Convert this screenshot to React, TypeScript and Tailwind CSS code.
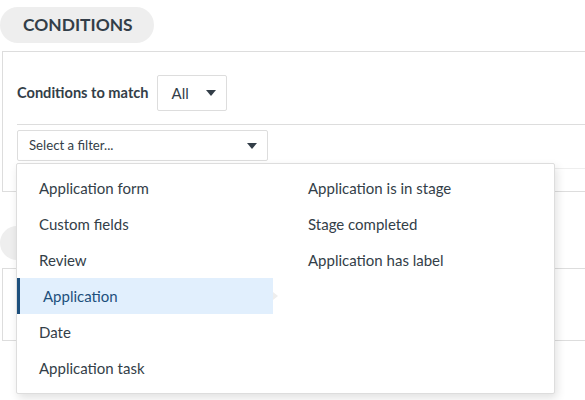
import React from 'react';

const leftItems = ['Application form', 'Custom fields', 'Review', 'Application', 'Date', 'Application task'];
const rightItems = ['Application is in stage', 'Stage completed', 'Application has label'];

function Caret() {
  return (
    <svg width="10" height="6" viewBox="0 0 10 6" className="shrink-0">
      <path d="M0 0h10L5 6z" fill="#333e48" />
    </svg>
  );
}

export default function App() {
  return (
    <div className="relative w-[585px] h-[400px] overflow-hidden bg-white text-[#333e48] font-['Lato',sans-serif]">
      <div className="pt-[7px]">
        <div className="flex h-[36px] w-[154px] items-center rounded-full bg-[#eeeeee] pl-[23px] text-[17.4px] font-bold">
          CONDITIONS
        </div>
        <div className="mt-[8px] ml-[2px] h-[141px] border-y border-l border-[#dddddd] pl-[14px]">
          <div className="flex items-center pt-[23px]">
            <span className="text-[14.6px] font-bold">Conditions to match</span>
            <div className="ml-[8px] flex h-[36px] w-[70px] items-center justify-between rounded-[2px] border border-[#dddddd] pl-[14px] pr-[10px] text-[15px]">
              All
              <Caret />
            </div>
          </div>
          <div className="mt-[13px] border-t border-[#dddddd]" />
          <div className="mt-[5px] flex h-[31px] w-[251px] items-center justify-between rounded-[2px] border border-[#dddddd] pl-[11px] pr-[10px] text-[13.2px]">
            Select a filter...
            <Caret />
          </div>
          <div className="mt-[7px] border-t border-[#eeeeee]" />
        </div>
        <div className="mt-[34px] h-[34px] w-[154px] rounded-full bg-[#eeeeee]" />
        <div className="mt-[8px] ml-[2px] h-[73px] border-y border-l border-[#dddddd]" />
      </div>

      <div className="absolute left-[16px] top-[163px] flex h-[231px] w-[539px] rounded-[2px] border border-[#dddddd] bg-white pt-[6px] shadow-[2px_4px_10px_rgba(0,0,0,0.12)]">
        <div className="w-[256px]">
          {leftItems.map((item) => {
            const active = item === 'Application';
            return (
              <div
                key={item}
                className={
                  active
                    ? 'relative flex h-[36px] items-center border-l-[3px] border-[#1d4f7c] bg-[#e1effd] pl-[23px] text-[15px] text-[#1d4f7c]'
                    : 'flex h-[36px] items-center pl-[22px] text-[15px]'
                }
              >
                {item}
                {active && (
                  <span className="absolute right-[-5px] top-[14px] h-0 w-0 border-y-[4px] border-l-[5px] border-y-transparent border-l-[#eeeeee]" />
                )}
              </div>
            );
          })}
        </div>
        <div className="pl-[35px]">
          {rightItems.map((item) => (
            <div key={item} className="flex h-[36px] items-center text-[15px]">
              {item}
            </div>
          ))}
        </div>
      </div>
    </div>
  );
}
